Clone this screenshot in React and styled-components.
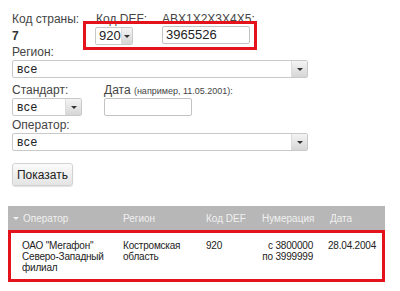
import React from "react";
import styled, { createGlobalStyle } from "styled-components";

const GlobalStyle = createGlobalStyle`
  html, body {
    margin: 0;
    padding: 0;
    background: #ffffff;
  }
  body {
    font-family: "Liberation Sans", Arial, sans-serif;
    color: #333333;
  }
`;

const Page = styled.div`
  width: 400px;
  height: 291px;
  padding: 0 8px;
  box-sizing: border-box;
  overflow: hidden;
`;

const Form = styled.div`
  padding: 12px 0 0 4px;
  display: flex;
  flex-direction: column;
`;

const TopRow = styled.div`
  position: relative;
  display: flex;
  flex-direction: row;
`;

const Field = styled.div`
  display: flex;
  flex-direction: column;
  width: ${(p) => p.$width || "auto"};
  margin-top: ${(p) => p.$top || "0px"};
`;

const Label = styled.div`
  font-size: 12px;
  line-height: 14px;
  color: #444444;
  height: 14px;
  white-space: nowrap;
`;

const Hint = styled.span`
  font-size: 9px;
  color: #444;
`;

const Strong = styled.div`
  font-size: 12px;
  font-weight: bold;
  line-height: 14px;
  margin-top: 3px;
  color: #333;
`;

const Highlight = styled.div`
  position: absolute;
  left: 71px;
  top: 9px;
  width: 174px;
  height: 29px;
  border: 3px solid #e3121b;
  box-sizing: border-box;
  pointer-events: none;
`;

const SelectBox = styled.div`
  width: ${(p) => p.$width};
  height: 18px;
  margin-top: ${(p) => p.$gap || "1px"};
  margin-left: ${(p) => p.$shift || "0px"};
  border: 1px solid #c9c9c9;
  border-radius: 2px;
  box-sizing: border-box;
  display: flex;
  align-items: center;
  background: #fff;
`;

const SelectValue = styled.div`
  flex: 1;
  padding-left: ${(p) => p.$pad || "4px"};
  font-size: ${(p) => p.$size || "12px"};
  letter-spacing: ${(p) => p.$spacing || "0.6px"};
  color: #222;
  line-height: 16px;
`;

const DropButton = styled.div`
  width: 15px;
  height: 16px;
  border-left: 1px solid #dcdcdc;
  background: linear-gradient(#f4f4f4, #d6d6d6);
  display: flex;
  align-items: center;
  justify-content: center;
  &::after {
    content: "";
    border-left: 3px solid transparent;
    border-right: 3px solid transparent;
    border-top: 3px solid #333;
  }
`;

const TextInput = styled.div`
  width: ${(p) => p.$width};
  height: 18px;
  margin-top: ${(p) => p.$gap || "1px"};
  border: 1px solid #c3c3c3;
  border-radius: 2px;
  box-sizing: border-box;
  padding-left: 3px;
  font-size: 13px;
  line-height: 16px;
  color: #222;
`;

const Row = styled.div`
  display: flex;
  flex-direction: row;
  gap: ${(p) => p.$gap || "0px"};
`;

const Button = styled.div`
  margin-top: 12px;
  width: 61px;
  height: 23px;
  border: 1px solid #d2d2d2;
  border-radius: 3px;
  box-sizing: border-box;
  background: linear-gradient(#fbfbfb, #e4e4e4);
  box-shadow: 0 1px 1px rgba(0, 0, 0, 0.12);
  font-size: 12px;
  color: #222;
  display: flex;
  align-items: center;
  justify-content: center;
`;

const Table = styled.div`
  margin-top: 20px;
  width: 377px;
`;

const Head = styled.div`
  display: grid;
  grid-template-columns: 114px 84px 56px 66px 1fr;
  height: 24px;
  align-items: center;
  background: #b7b7b7;
  color: #f0f0f0;
  font-size: 10px;
`;

const HeadCell = styled.div`
  padding-left: ${(p) => p.$pad || "0px"};
  white-space: nowrap;
`;

const Arrow = styled.span`
  display: inline-block;
  margin-right: 4px;
  vertical-align: middle;
  border-left: 3px solid transparent;
  border-right: 3px solid transparent;
  border-top: 3px solid #f0f0f0;
`;

const ResultRow = styled.div`
  display: grid;
  grid-template-columns: 111px 84px 56px 66px 1fr;
  border: 3px solid #e3121b;
  box-sizing: border-box;
  height: 52px;
  padding-top: 7px;
  font-size: 10px;
  line-height: 11px;
  letter-spacing: -0.2px;
  color: #222;
`;

const Cell = styled.div`
  padding-left: ${(p) => p.$pad || "0px"};
  padding-right: ${(p) => p.$right || "0px"};
  text-align: ${(p) => p.$align || "left"};
  white-space: nowrap;
`;

const Select = ({ width, value }) => (
  <SelectBox $width={width}>
    <SelectValue>{value}</SelectValue>
    <DropButton />
  </SelectBox>
);

const App = () => {
  return (
    <Page>
      <GlobalStyle />
      <Form>
        <TopRow>
          <Field $width="84px">
            <Label>Код страны:</Label>
            <Strong>7</Strong>
          </Field>
          <Field $width="66px">
            <Label>Код DEF:</Label>
            <SelectBox $width="38px" $shift="-1px">
              <SelectValue $pad="3px" $size="13px" $spacing="0">
                920
              </SelectValue>
              <DropButton />
            </SelectBox>
          </Field>
          <Field>
            <Label>ABX1X2X3X4X5:</Label>
            <TextInput $width="88px" $gap="0px">
              3965526
            </TextInput>
          </Field>
          <Highlight />
        </TopRow>

        <Field>
          <Label>Регион:</Label>
          <Select width="296px" value="все" />
        </Field>

        <Row $gap="22px">
          <Field $top="5px" $width="70px">
            <Label>Стандарт:</Label>
            <Select width="70px" value="все" />
          </Field>
          <Field $top="5px">
            <Label>
              Дата <Hint>(например, 11.05.2001):</Hint>
            </Label>
            <TextInput $width="88px" />
          </Field>
        </Row>

        <Field $top="2px">
          <Label>Оператор:</Label>
          <Select width="296px" value="все" />
        </Field>

        <Button>Показать</Button>
      </Form>

      <Table>
        <Head>
          <HeadCell $pad="5px">
            <Arrow />
            Оператор
          </HeadCell>
          <HeadCell $pad="1px">Регион</HeadCell>
          <HeadCell>Код DEF</HeadCell>
          <HeadCell>Нумерация</HeadCell>
          <HeadCell $pad="2px">Дата</HeadCell>
        </Head>
        <ResultRow>
          <Cell $pad="11px">
            ОАО "Мегафон"
            <br />
            Северо-Западный
            <br />
            филиал
          </Cell>
          <Cell $pad="1px">
            Костромская
            <br />
            область
          </Cell>
          <Cell>920</Cell>
          <Cell $align="right" $right="15px">
            с 3800000
            <br />
            по 3999999
          </Cell>
          <Cell>28.04.2004</Cell>
        </ResultRow>
      </Table>
    </Page>
  );
};

export default App;
